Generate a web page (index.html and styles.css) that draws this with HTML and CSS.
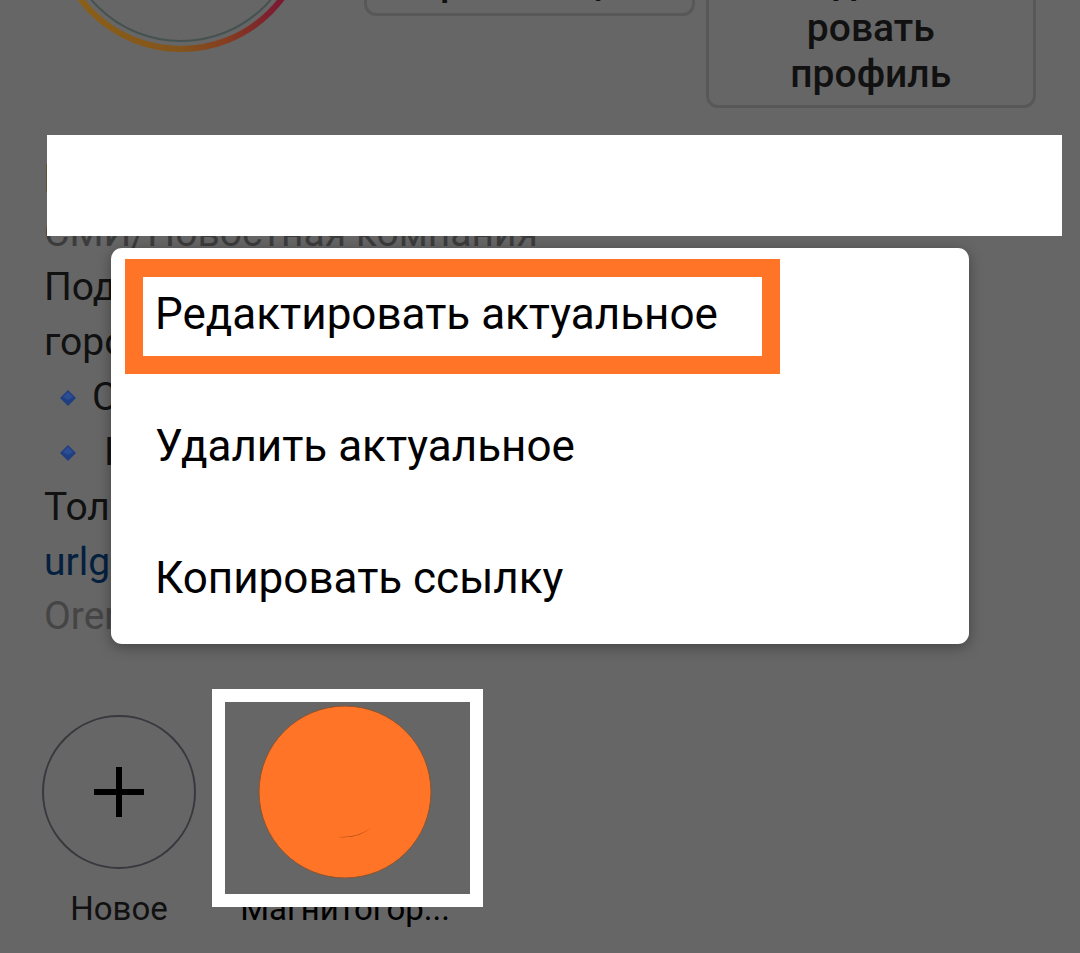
FILE: index.html
```
<!DOCTYPE html>
<html lang="ru">
<head>
    <meta charset="UTF-8">
    <meta name="viewport" content="width=device-width, initial-scale=1.0">
    <title>Профиль</title>
    <link rel="stylesheet" href="styles.css">
</head>
<body>
    <main class="profile">
        <header class="profile-header">
            <svg class="avatar" width="258" height="107" viewBox="0 151 258 107" aria-hidden="true">
                <defs>
                    <linearGradient id="story" x1="0" y1="0" x2="1" y2="0">
                        <stop offset="0.1" stop-color="#8a5f18"/>
                        <stop offset="0.5" stop-color="#83541c"/>
                        <stop offset="0.68" stop-color="#863d20"/>
                        <stop offset="0.9" stop-color="#7a1832"/>
                    </linearGradient>
                </defs>
                <circle cx="129" cy="129" r="126" fill="none" stroke="url(#story)" stroke-width="6"/>
                <circle cx="129" cy="129" r="118" fill="none" stroke="#465250" stroke-width="2"/>
            </svg>
            <div class="actions">
                <button class="action">Промоакции</button>
                <button class="action">Редакти-<br>ровать<br>профиль</button>
            </div>
        </header>

        <section class="bio">
            <div class="line name">Н</div>
            <div class="line category">СМИ/Новостная компания</div>
            <div class="cover"></div>
            <div class="about">
                <div>Под</div>
                <div>горо</div>
                <div class="bullet">
                    <svg width="16" height="16" viewBox="0 0 16 16"><path d="M8 0l8 8-8 8-8-8z" fill="#203f80"/><path d="M8 2l5 5-5 3-5-3z" fill="#2c4d93"/></svg>
                    <span>С</span>
                </div>
                <div class="bullet wide">
                    <svg width="16" height="16" viewBox="0 0 16 16"><path d="M8 0l8 8-8 8-8-8z" fill="#203f80"/><path d="M8 2l5 5-5 3-5-3z" fill="#2c4d93"/></svg>
                    <span>К</span>
                </div>
                <div>Тол</div>
            </div>
            <div class="line"><a href="#">urlg</a></div>
            <div class="line place">Oren</div>
        </section>

        <section class="highlights">
            <button class="highlight">
                <span class="picture">
                    <svg width="154" height="154" viewBox="0 0 154 154" aria-hidden="true">
                        <circle cx="77" cy="77" r="76" fill="none" stroke="#38383e" stroke-width="2"/>
                        <path d="M77 52v50M52 77h50" stroke="#000" stroke-width="6"/>
                    </svg>
                </span>
                <span>Новое</span>
            </button>
            <button class="highlight selected">
                <span class="picture">
                    <svg width="174" height="174" viewBox="0 0 174 174" aria-hidden="true">
                        <circle cx="87" cy="87" r="86" fill="#ff7426" stroke="#8a5330" stroke-width="1"/>
                        <path d="M80 132q19 2 33-9q-14 10-33 9z" fill="#8a3c10"/>
                    </svg>
                </span>
                <span>Магнитогор...</span>
                <span class="frame"></span>
            </button>
        </section>
    </main>

    <div class="overlay">
        <div class="menu" role="dialog">
            <button class="menu-item marked">Редактировать актуальное</button>
            <button class="menu-item">Удалить актуальное</button>
            <button class="menu-item">Копировать ссылку</button>
        </div>
    </div>
</body>
</html>
```

FILE: styles.css
```
*, *::before {
    box-sizing: border-box;
}
body {
    margin: 0;
    background-color: #666666;
    color: #111111;
    font-family: Roboto, "Noto Sans", sans-serif;
    font-size: 39px;
}
button {
    font-family: inherit;
    color: inherit;
    background: none;
    border: none;
    padding: 0;
    cursor: pointer;
}
.profile {
    position: relative;
    min-height: 100vh;
    overflow: hidden;
}

/* Header is scrolled partly off the top */
.profile-header {
    display: flex;
    gap: 54px;
    margin-top: -55px;
    padding: 0 44px 0 52px;
}
.avatar {
    flex: none;
}
.actions {
    flex: 1;
    display: flex;
    align-items: flex-start;
    gap: 11px;
}
.action {
    flex: 1;
    padding: 11px 0 8px;
    border: 3px solid #585858;
    border-radius: 12px;
    font-size: 39px;
    font-weight: 500;
    line-height: 46px;
}

.bio {
    position: relative;
    padding: 44px 44px 0;
}
.line {
    line-height: 54px;
}
.name {
    font-weight: 500;
}
.category {
    color: #3c3c3c;
}
.cover {
    position: absolute;
    top: 27px;
    left: 47px;
    right: 18px;
    height: 101px;
    background-color: #ffffff;
}
.about {
    line-height: 55px;
}
.bullet {
    display: flex;
    align-items: center;
    gap: 16px;
    padding-left: 16px;
}
.wide {
    gap: 28px;
}
.bio a {
    color: #04203f;
    text-decoration: none;
}
.place {
    color: #454545;
}

.highlights {
    display: flex;
    gap: 20px;
    padding: 62px 16px 0;
}
.highlight {
    position: relative;
    width: 206px;
    display: flex;
    flex-direction: column;
    gap: 10px;
    align-items: center;
    font-size: 33px;
    line-height: 40px;
}
.picture {
    height: 174px;
    display: flex;
    align-items: center;
}
.selected {
    color: #000000;
}
.frame {
    position: absolute;
    top: -16px;
    left: -30px;
    right: -35px;
    height: 218px;
    border: 13px solid #ffffff;
}

.overlay {
    position: absolute;
    top: 248px;
    left: 0;
    right: 0;
    padding: 0 111px;
}
.menu {
    display: flex;
    flex-direction: column;
    background-color: #ffffff;
    border-radius: 11px;
    box-shadow: 0 3px 14px rgba(0, 0, 0, 0.35);
}
.menu-item {
    position: relative;
    padding: 40px 44px;
    color: #000000;
    font-size: 44px;
    line-height: 52px;
    text-align: left;
}
.marked::before {
    content: "";
    position: absolute;
    top: 11px;
    left: 14px;
    width: 655px;
    height: 115px;
    border: 18px solid #ff7426;
}
```
